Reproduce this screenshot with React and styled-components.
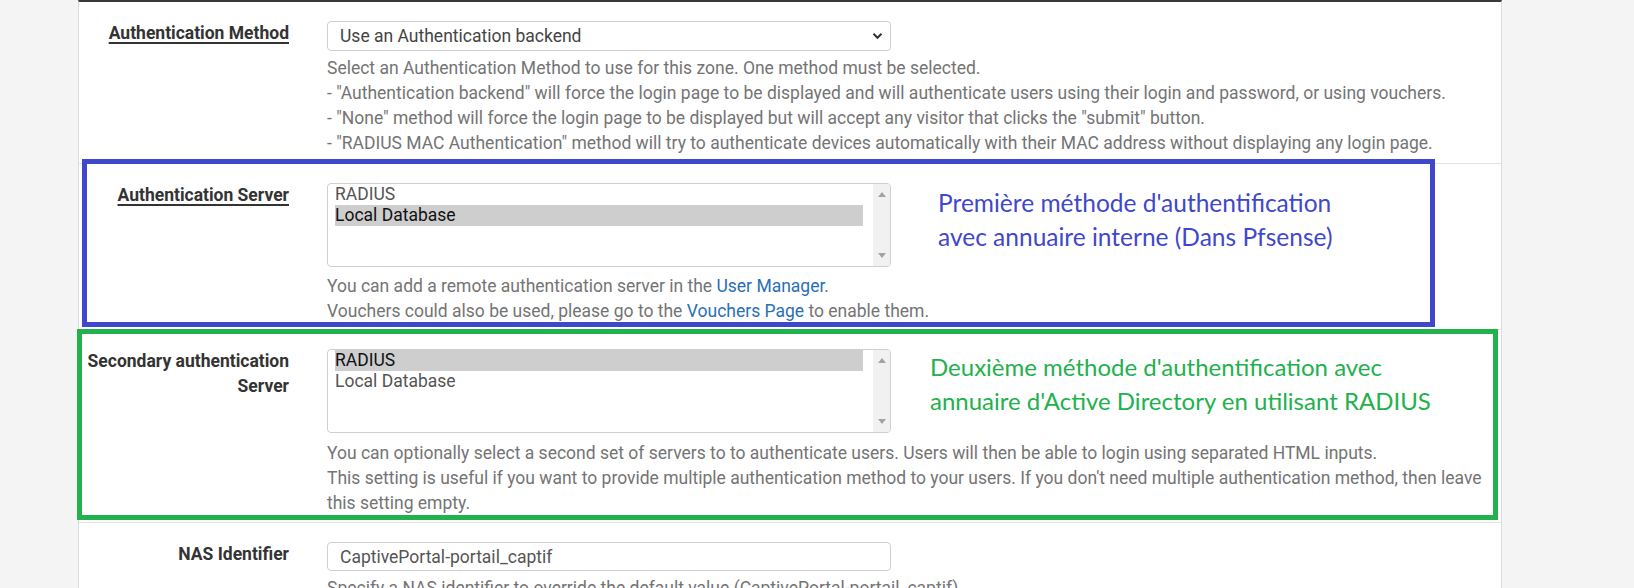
import React from "react";
import styled, { createGlobalStyle } from "styled-components";

const GlobalStyle = createGlobalStyle`
  html, body {
    margin: 0;
    padding: 0;
    background: #f4f4f4;
  }
  body {
    font-family: Roboto, "Liberation Sans", sans-serif;
    overflow: hidden;
  }
`;

const Page = styled.div`
  height: 588px;
  overflow: hidden;
  padding-left: 78px;
`;

const Panel = styled.div`
  width: 1422px;
  min-height: 586px;
  background: #fff;
  border-left: 1px solid #dcdcdc;
  border-right: 1px solid #dcdcdc;
  border-top: 2px solid #383838;
`;

const Row = styled.div`
  position: relative;
  display: flex;
  gap: 38px;
  padding: 19px 11px ${(p) => p.$pb ?? 7}px 0;
  border-top: ${(p) => (p.$first ? "none" : "1px solid #e3e3e3")};
`;

const Label = styled.div`
  flex-shrink: 0;
  width: 210px;
  text-align: right;
  font-size: 17.5px;
  line-height: 25px;
  font-weight: 700;
  color: #333;
  span {
    text-decoration: ${(p) => (p.$required ? "underline" : "none")};
    text-underline-offset: 3px;
    text-decoration-thickness: 1.5px;
  }
`;

const Field = styled.div`
  flex: 1;
  min-width: 0;
`;

const ControlLine = styled.div`
  display: flex;
  align-items: flex-start;
`;

const SelectBox = styled.div`
  box-sizing: border-box;
  width: 564px;
  height: 30px;
  display: flex;
  align-items: center;
  justify-content: space-between;
  padding: 0 7px 0 12px;
  border: 1px solid #cfcfcf;
  border-radius: 4px;
  font-size: 17.5px;
  color: #444;
`;

const TextInput = styled(SelectBox)`
  height: 29px;
  color: #555;
`;

const ListBox = styled.div`
  box-sizing: border-box;
  width: 564px;
  height: 84px;
  flex-shrink: 0;
  display: flex;
  border: 1px solid #cfcfcf;
  border-radius: 4px;
  overflow: hidden;
`;

const Options = styled.div`
  flex: 1;
  padding: 0 10px 0 7px;
`;

const Option = styled.div`
  height: 21px;
  line-height: 21px;
  font-size: 17.5px;
  color: ${(p) => (p.$selected ? "#111" : "#555")};
  background: ${(p) => (p.$selected ? "#cecece" : "transparent")};
`;

const Scrollbar = styled.div`
  width: 17px;
  background: #f1f1f1;
  display: flex;
  flex-direction: column;
  justify-content: space-between;
  align-items: center;
  padding: 8px 0;
`;

const Arrow = styled.div`
  width: 0;
  height: 0;
  border-left: 4px solid transparent;
  border-right: 4px solid transparent;
  ${(p) =>
    p.$dir === "up"
      ? "border-bottom: 5px solid #a3a3a3;"
      : "border-top: 5px solid #a3a3a3;"}
`;

const Note = styled.div`
  font-family: Lato, "Open Sans", sans-serif;
  font-size: ${(p) => p.$size}px;
  line-height: 34px;
  color: ${(p) => p.$color};
  margin-left: ${(p) => p.$gap}px;
  margin-top: ${(p) => p.$top}px;
  white-space: nowrap;
`;

const Help = styled.div`
  margin-top: ${(p) => p.$mt ?? 5}px;
  font-size: 17.5px;
  line-height: 25px;
  color: #747474;
  a {
    color: #2a6eb8;
    text-decoration: none;
  }
`;

const Frame = styled.div`
  position: absolute;
  z-index: 2;
  pointer-events: none;
  border: 5px solid ${(p) => p.$color};
  top: ${(p) => p.$top}px;
  left: ${(p) => p.$left}px;
  right: ${(p) => p.$right}px;
  bottom: ${(p) => p.$bottom}px;
`;

const Chevron = () => (
  <svg width="11" height="8" viewBox="0 0 11 8">
    <path d="M1.5 1.8 L5.5 5.8 L9.5 1.8" fill="none" stroke="#333" strokeWidth="2" />
  </svg>
);

const ServerList = ({ selected }) => (
  <ListBox>
    <Options>
      <Option $selected={selected === "RADIUS"}>RADIUS</Option>
      <Option $selected={selected === "Local Database"}>Local Database</Option>
    </Options>
    <Scrollbar>
      <Arrow $dir="up" />
      <Arrow $dir="down" />
    </Scrollbar>
  </ListBox>
);

const BLUE = "#3f48cc";
const GREEN = "#22b14c";

export default function App() {
  return (
    <>
      <GlobalStyle />
      <Page>
        <Panel>
          <Row $first>
            <Label $required>
              <span>Authentication Method</span>
            </Label>
            <Field>
              <SelectBox>
                Use an Authentication backend
                <Chevron />
              </SelectBox>
              <Help>
                Select an Authentication Method to use for this zone. One method must be selected.
                <br />- "Authentication backend" will force the login page to be displayed and will authenticate users using their login and password, or using vouchers.
                <br />- "None" method will force the login page to be displayed but will accept any visitor that clicks the "submit" button.
                <br />- "RADIUS MAC Authentication" method will try to authenticate devices automatically with their MAC address without displaying any login page.
              </Help>
            </Field>
          </Row>

          <Row $pb={5}>
            <Frame $color={BLUE} $top={-5} $left={3} $right={66} $bottom={2} />
            <Label $required>
              <span>Authentication Server</span>
            </Label>
            <Field>
              <ControlLine>
                <ServerList selected="Local Database" />
                <Note $color={BLUE} $size={24.5} $gap={47} $top={3}>
                  Première méthode d'authentification
                  <br />
                  avec annuaire interne (Dans Pfsense)
                </Note>
              </ControlLine>
              <Help $mt={7}>
                You can add a remote authentication server in the <a href="#">User Manager</a>.
                <br />
                Vouchers could also be used, please go to the <a href="#">Vouchers Page</a> to enable them.
              </Help>
            </Field>
          </Row>

          <Row $pb={6}>
            <Frame $color={GREEN} $top={-1} $left={-2} $right={3} $bottom={2} />
            <Label>
              <span>Secondary authentication Server</span>
            </Label>
            <Field>
              <ControlLine>
                <ServerList selected="RADIUS" />
                <Note $color={GREEN} $size={24} $gap={39} $top={1}>
                  Deuxième méthode d'authentification avec
                  <br />
                  annuaire d'Active Directory en utilisant RADIUS
                </Note>
              </ControlLine>
              <Help $mt={8}>
                You can optionally select a second set of servers to to authenticate users. Users will then be able to login using separated HTML inputs.
                <br />
                This setting is useful if you want to provide multiple authentication method to your users. If you don't need multiple authentication method, then leave this setting empty.
              </Help>
            </Field>
          </Row>

          <Row>
            <Label>
              <span>NAS Identifier</span>
            </Label>
            <Field>
              <TextInput>CaptivePortal-portail_captif</TextInput>
              <Help>
                Specify a NAS identifier to override the default value (CaptivePortal-portail_captif)
              </Help>
            </Field>
          </Row>
        </Panel>
      </Page>
    </>
  );
}
